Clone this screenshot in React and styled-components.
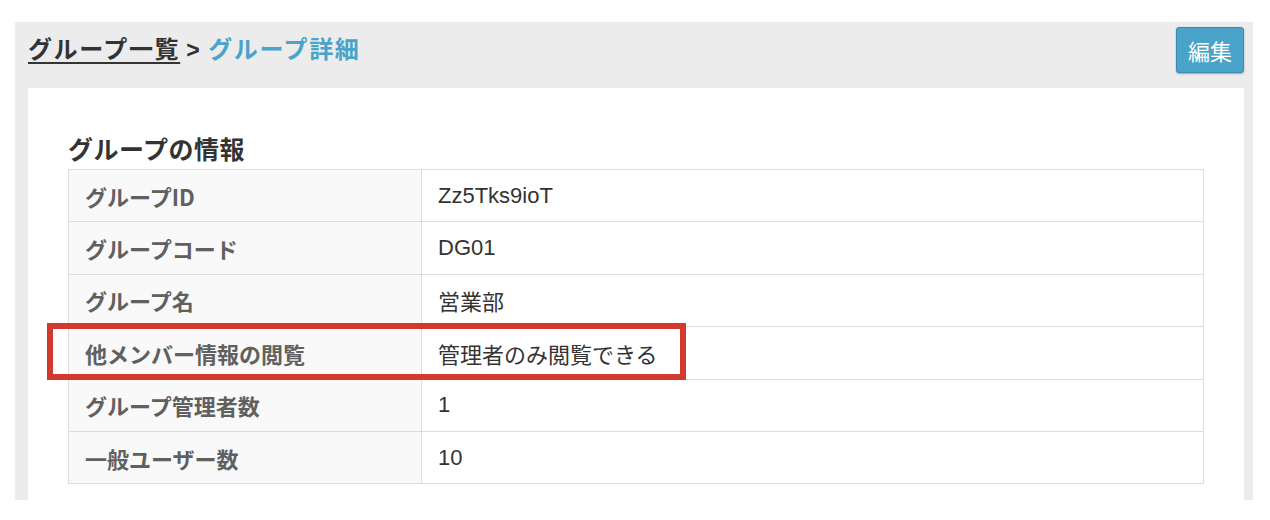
import styled, { createGlobalStyle } from "styled-components";

const GlobalStyle = createGlobalStyle`
  body {
    margin: 0;
    background: #fff;
    font-family: "Liberation Sans", "Noto Sans CJK JP", sans-serif;
    color: #333;
  }
`;

const Page = styled.div`
  padding: 22px 0 20px 15px;
  width: 1238px;
`;

const Panel = styled.section`
  background: #ececec;
  padding: 0 9px 0 13px;
  height: 478px;
  display: flex;
  flex-direction: column;
`;

const Header = styled.header`
  height: 66px;
  display: flex;
  align-items: flex-start;
  justify-content: space-between;
`;

const Breadcrumb = styled.nav`
  margin-top: 10px;
  font-size: 24px;
  font-weight: bold;
  line-height: 32px;
  font-family: "Noto Sans CJK JP", sans-serif;
  letter-spacing: 1.6px;
`;

const CrumbLink = styled.a`
  color: #333;
  text-decoration: underline;
  text-decoration-thickness: 2px;
  text-underline-offset: 4px;
`;

const Sep = styled.span`
  color: #333;
  margin: 0 7px 0 6px;
  font-size: 23px;
  font-weight: bold;
  font-family: "Liberation Sans", sans-serif;
`;

const Current = styled.span`
  color: #4aa3c9;
`;

const EditButton = styled.button`
  margin-top: 5px;
  width: 68px;
  height: 46px;
  border: 1px solid #3a8bb0;
  border-radius: 3px;
  background: #4aa3c9;
  color: #fff;
  font-size: 22px;
  font-family: "Noto Sans CJK JP", sans-serif;
  box-shadow: 0 1px 2px rgba(0, 0, 0, 0.3);
  padding: 0;
`;

const Body = styled.div`
  flex: 1;
  background: #fff;
  padding: 37px 40px 0 40px;
`;

const Title = styled.h2`
  margin: 5px 0 3px;
  font-size: 25px;
  line-height: 36px;
  font-weight: bold;
  font-family: "Noto Sans CJK JP", sans-serif;
  letter-spacing: 0.5px;
  color: #333;
`;

const TableWrap = styled.div`
  position: relative;
`;

const Table = styled.table`
  width: 100%;
  border-collapse: collapse;
  border: 1px solid #ddd;
  font-size: 22px;
`;

const Row = styled.tr`
  height: 52.4px;
`;

const Label = styled.th`
  width: 320px;
  text-align: left;
  background: #f9f9f9;
  color: #606060;
  font-weight: bold;
  font-family: "Noto Sans CJK JP", sans-serif;
  padding: 0 16px;
  border: 1px solid #ddd;
`;

const Value = styled.td`
  padding: 0 16px;
  border: 1px solid #ddd;
  color: #333;
  font-family: "Liberation Sans", "Noto Sans CJK JP", sans-serif;
`;

const Highlight = styled.div`
  position: absolute;
  left: -21px;
  top: 154px;
  width: 627px;
  height: 45px;
  border: 6px solid #d33a2f;
  pointer-events: none;
`;

const rows = [
  ["グループID", "Zz5Tks9ioT"],
  ["グループコード", "DG01"],
  ["グループ名", "営業部"],
  ["他メンバー情報の閲覧", "管理者のみ閲覧できる"],
  ["グループ管理者数", "1"],
  ["一般ユーザー数", "10"],
];

export default function App() {
  return (
    <>
      <GlobalStyle />
      <Page>
        <Panel>
          <Header>
            <Breadcrumb>
              <CrumbLink href="#">グループ一覧</CrumbLink>
              <Sep>&gt;</Sep>
              <Current>グループ詳細</Current>
            </Breadcrumb>
            <EditButton>編集</EditButton>
          </Header>
          <Body>
            <Title>グループの情報</Title>
            <TableWrap>
              <Table>
                <tbody>
                  {rows.map(([k, v]) => (
                    <Row key={k}>
                      <Label>{k}</Label>
                      <Value>{v}</Value>
                    </Row>
                  ))}
                </tbody>
              </Table>
              <Highlight />
            </TableWrap>
          </Body>
        </Panel>
      </Page>
    </>
  );
}
